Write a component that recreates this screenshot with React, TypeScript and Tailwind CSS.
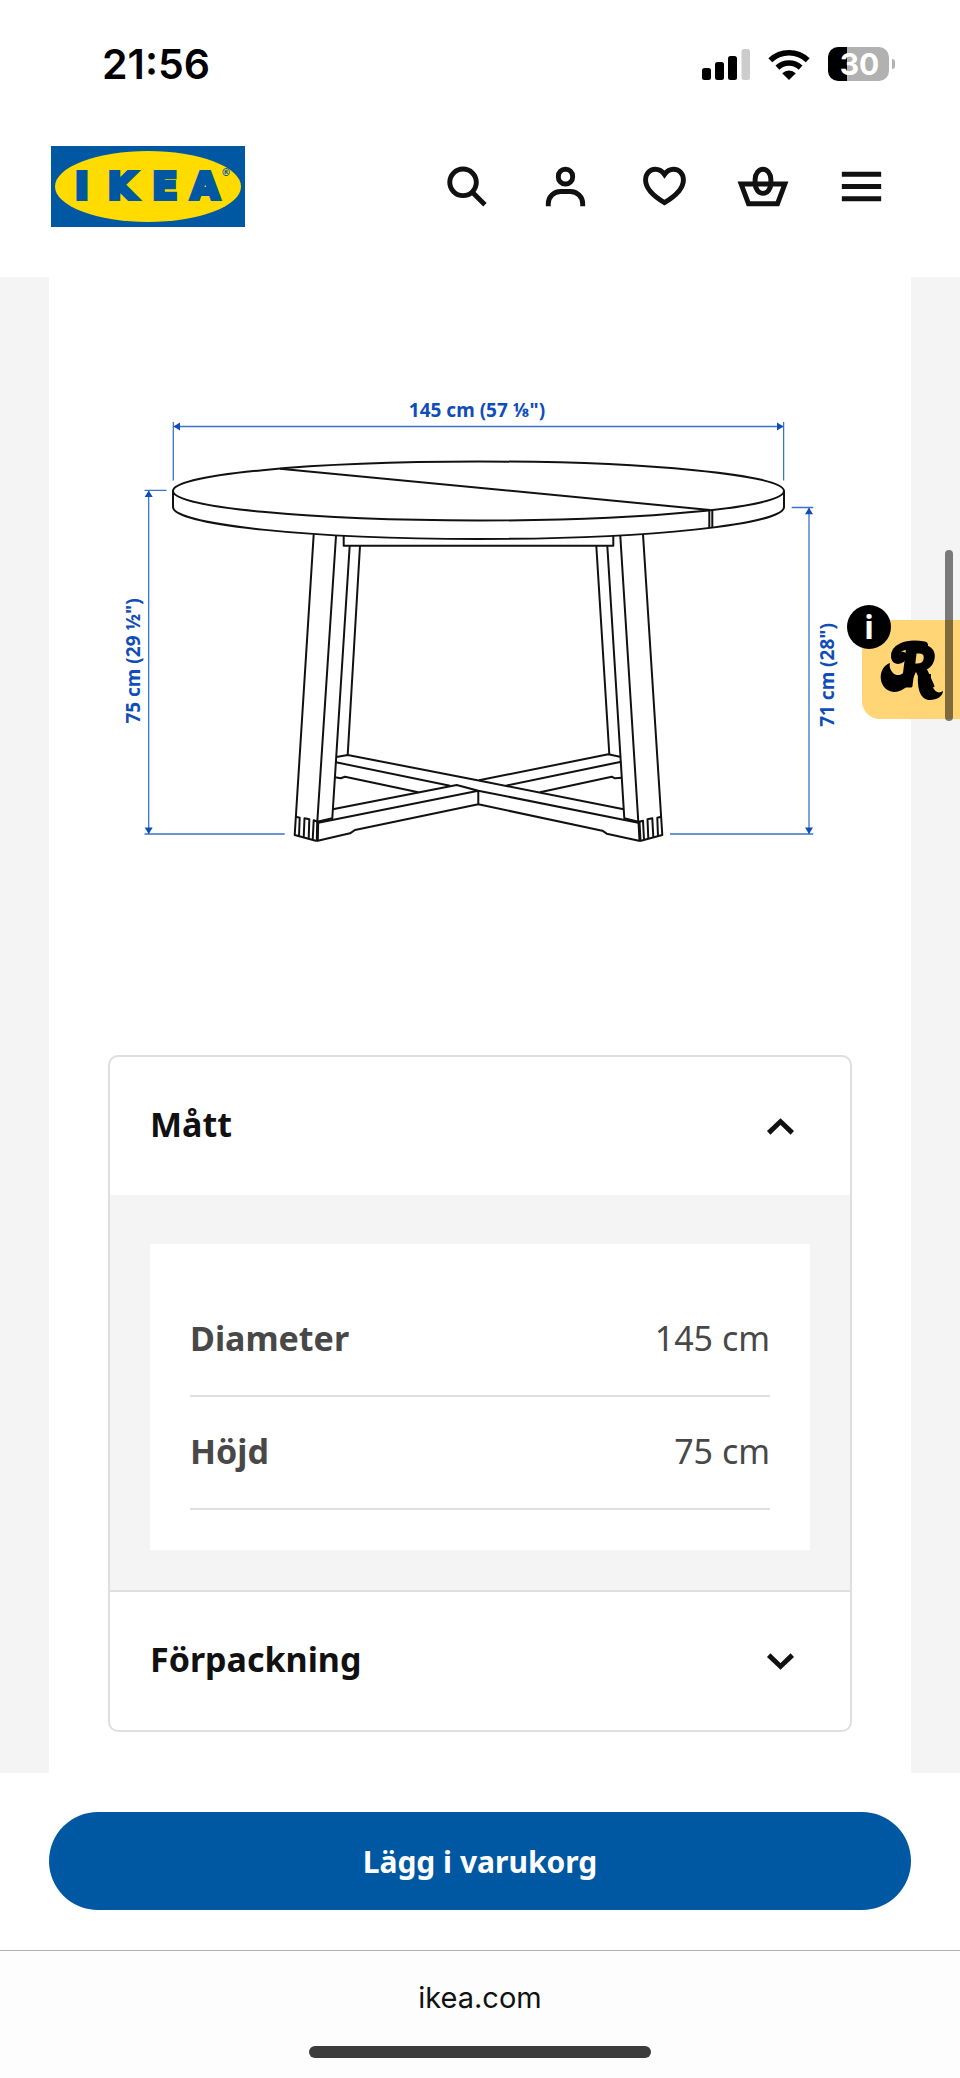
import { useState } from 'react';
import type { ReactNode } from 'react';

function StatusBar() {
  return (
    <div className="flex h-[128px] items-center justify-between pr-[65px] pl-[102px] font-['Inter',sans-serif]">
      <time className="text-[41px] leading-none font-semibold text-black">21:56</time>
      <div className="flex items-center gap-[18px]">
        <svg className="h-[32px] w-[48px]" viewBox="0 0 48 32" aria-label="Mobilsignal">
          <rect x="0" y="20" width="9" height="12" rx="2.5" />
          <rect x="13" y="14" width="9" height="18" rx="2.5" />
          <rect x="26" y="8" width="9" height="24" rx="2.5" />
          <rect x="39.5" y="1" width="8.5" height="31" rx="2.5" fill="#cccccc" />
        </svg>
        <svg className="h-[31px] w-[42px]" viewBox="0 0 42 31" aria-label="Wifi">
          <path
            fill="none"
            stroke="#000"
            strokeWidth="5.6"
            d="M2.3 11.2a27 27 0 0 1 37.4 0M9.4 18.6a17 17 0 0 1 23.2 0"
          />
          <path d="M21 31l-6.800-6.800a10 10 0 0 1 13.600 0z" />
        </svg>
        <div className="flex items-center gap-[3px]">
          <div className="flex h-[34px] w-[61px] items-center justify-center rounded-[10px] bg-[linear-gradient(to_right,#000_0_19px,#b1b1b1_19px)] pl-[2px] text-[30px] leading-none font-bold text-white">
            30
          </div>
          <div className="h-[10px] w-[3px] rounded-r-full bg-[#b1b1b1]" />
        </div>
      </div>
    </div>
  );
}

function Logo() {
  return (
    <svg className="block h-[81px] w-[194px]" viewBox="0 0 194 81" role="img" aria-label="IKEA">
      <rect width="194" height="81" fill="#0058a3" />
      <ellipse cx="97" cy="40.500" rx="93" ry="35.500" fill="#ffdb00" />
      <g fill="#0058a3" stroke="#0058a3" textAnchor="middle" fontFamily="DejaVu Sans" fontWeight="700">
        <text x="31 71 114 154" y="53" fontSize="37" strokeWidth="4">
          IKEA
        </text>
        <text x="175" y="30" fontSize="10" strokeWidth="0">
          ®
        </text>
      </g>
    </svg>
  );
}

function NavIcon({ label, children }: { label: string; children: ReactNode }) {
  return (
    <button type="button" aria-label={label} className="flex h-[98px] w-[99px] items-center justify-center">
      <svg className="h-[59px] w-[59px]" viewBox="0 0 24 24" fill="none" stroke="#111" strokeWidth="2">
        {children}
      </svg>
    </button>
  );
}

function Header() {
  return (
    <header className="bg-white pb-[42px]">
      <StatusBar />
      <div className="flex items-center justify-between pt-[9px] pr-[49px] pl-[51px]">
        <a href="#start" aria-label="IKEA">
          <Logo />
        </a>
        <nav className="flex">
          <NavIcon label="Sök">
            <path d="M14.700 14.200l5.200 5.200" />
            <circle cx="11" cy="10.300" r="5.400" />
          </NavIcon>
          <NavIcon label="Konto">
            <rect x="9.500" y="5" width="5.800" height="6" rx="2.800" />
            <path d="M5.400 20v-1a5 5 0 0 1 5-5h4a5 5 0 0 1 5 5v1" />
          </NavIcon>
          <NavIcon label="Favoriter">
            <path d="M12.400 7.100C11.400 5.700 10.100 5 8.700 5 6.300 5 4.700 6.900 4.700 9.400c0 3.600 3.500 6.700 7.700 9.200 4.200-2.500 7.700-5.600 7.700-9.200C20.100 6.900 18.500 5 16.100 5c-1.400 0-2.700.7-3.700 2.100z" />
          </NavIcon>
          <NavIcon label="Varukorg">
            <path d="M3.300 11h17.800L18.100 19H6.300z" />
            <rect x="9" y="5" width="6.400" height="9.800" rx="3.200" ry="4" />
          </NavIcon>
          <NavIcon label="Meny">
            <path d="M4 7h16M4 12h16M4 17h16" />
          </NavIcon>
        </nav>
      </div>
    </header>
  );
}

function TableDrawing() {
  return (
    <svg className="block w-full" viewBox="49 277 862 778" role="img" aria-label="Måttritning av bord">
      <g fill="none" stroke="#111" strokeWidth="2" strokeLinejoin="round">
        {/* table top */}
        <ellipse cx="478.5" cy="491" rx="305.5" ry="29.5" />
        <path d="M173 491V507A305.500 32 0 0 0 784 507V491M280 468.700L710 510" />
        <path d="M709.300 510V528M712.300 510V528" />
        <path d="M343.700 536V545.700H613.300V536" />
        {/* left legs */}
        <path d="M313.700 534.300L294.700 835L316.700 841M336 536L317.300 821.700L332.300 818.300L349.700 545.700M360 545.700L347.700 755" />
        {/* right legs */}
        <path d="M643 534.300L662.300 835L640 841M620.300 536L638.300 821.700L624.300 818.300L607.300 545.700M596.300 545.700L609.300 754.300" />
        {/* cross rails */}
        <path d="M336.300 757L347.700 755L480 780.700L623.700 809.300M336 762.300L450 785.700M335 777.300L340.700 778.300L345 776.700L418.300 792.300" />
        <path d="M332.700 809.300L456.700 785L478.300 790.700L638.300 822.700M318.300 822.700L478.300 790.700V804.300L355 830L350 833.300L316.700 841M478.300 804.300L602.300 830.700L606.700 833.700L640 841" />
        <path d="M479 780.300L608.300 754.300L621 757M506 785.700L621.300 761.700M540 792.300L611.700 776.700L615 778.300L621.700 777.700" />
        {/* finger joints */}
        <path d="M295.700 816.700L299.700 817.700L299 836.300M303.700 837.300L304.500 818.300L309.300 819.300L308.700 838.700M312.700 839.700L313.700 820.300L317.700 821.700" />
        <path d="M661.300 816.700L657.300 817.700L658 836.300M653.300 837.300L652.300 818.300L647.500 819.300L648.300 838.700M644 839.700L643 820.700L639 821.700" />
        <path strokeWidth="3" d="M317.700 822L317.300 841M639 822L640 841" />
      </g>
      <g fill="none" stroke="#3a72cf" strokeWidth="1.300">
        <path d="M173.300 422V480.500M783.600 422V480.500M173.300 426.500H783.600" />
        <path d="M144.500 490.300H166.500M148.700 490.300V834M144.500 834H284.700" />
        <path d="M791.700 507.500H813.300M809 507.500V834M670 834H813.300" />
      </g>
      <g fill="#0f4db8">
        <path d="M173.500 426.500l6.500-4v8zM783.500 426.500l-6.500-4v8z" />
        <path d="M148.700 490.500l-4 6.500h8zM148.700 834l-4-6.500h8z" />
        <path d="M809 507.700l-4 6.500h8zM809 834l-4-6.500h8z" />
      </g>
      <g fill="#0f4db8" fontFamily="Noto Sans" fontWeight="700" fontSize="19" textAnchor="middle">
        <text x="477" y="417">145 cm (57 ⅛")</text>
        <text transform="translate(140 661) rotate(-90)">75 cm (29 ½")</text>
        <text transform="translate(834 675) rotate(-90)">71 cm (28")</text>
      </g>
    </svg>
  );
}

function Chevron({ up }: { up: boolean }) {
  return (
    <svg className="h-[59px] w-[59px]" viewBox="0 0 24 24" fill="none" stroke="#111" strokeWidth="2">
      <path d={up ? 'M7.200 14.600L12 10l4.800 4.600' : 'M7.200 9.400L12 14l4.800-4.600'} />
    </svg>
  );
}

function SectionHeader({ title, open, onToggle }: { title: string; open: boolean; onToggle: () => void }) {
  return (
    <h2>
      <button
        type="button"
        aria-expanded={open}
        onClick={onToggle}
        className="flex h-[138px] w-full items-center justify-between px-[40px] text-left text-[34px] font-bold text-[#111]"
      >
        <span className="pb-1">{title}</span>
        <Chevron up={open} />
      </button>
    </h2>
  );
}

const measurements = [
  { name: 'Diameter', value: '145 cm' },
  { name: 'Höjd', value: '75 cm' },
];

function Accordion() {
  const [sizesOpen, setSizesOpen] = useState(true);
  const [packageOpen, setPackageOpen] = useState(false);
  return (
    <div className="mx-[59px] overflow-hidden rounded-[10px] border-2 border-[#dfdfdf] bg-white">
      <SectionHeader title="Mått" open={sizesOpen} onToggle={() => setSizesOpen(!sizesOpen)} />
      {sizesOpen && (
        <div className="bg-[#f4f4f4] px-[40px] pt-[49px] pb-[40px]">
          <dl className="bg-white px-[40px] py-[40px] text-[34px] text-[#484848]">
            {measurements.map((m) => (
              <div
                key={m.name}
                className="flex h-[113px] items-center justify-between border-b-2 border-[#dfdfdf] pb-[3px]"
              >
                <dt className="font-bold">{m.name}</dt>
                <dd>{m.value}</dd>
              </div>
            ))}
          </dl>
        </div>
      )}
      <div className="border-t-2 border-[#dfdfdf]">
        <SectionHeader title="Förpackning" open={packageOpen} onToggle={() => setPackageOpen(!packageOpen)} />
      </div>
    </div>
  );
}

function InfoWidget() {
  return (
    <button
      type="button"
      aria-label="Information"
      className="absolute top-[620px] right-0 h-[99px] w-[98px] rounded-l-[18px] bg-[#ffd576]"
    >
      <svg className="absolute inset-0 h-[99px] w-[98px]" viewBox="862 620 98 99" aria-hidden="true">
        <text
          x="901"
          y="686"
          fontFamily="Lato"
          fontWeight="900"
          fontStyle="italic"
          fontSize="56"
          stroke="#000"
          strokeWidth="3"
          strokeLinejoin="round"
        >
          R
        </text>
        <path
          fill="none"
          stroke="#000"
          strokeWidth="8"
          strokeLinecap="round"
          d="M924 645.500C905 642 894 649 895 657C896 661 901 661 903 656"
        />
        <path d="M890 663C879 667 878 682 886 689C897 697 912 688 917 668L908 664C905 676 897 677 893 673C890 670 889 666 890 663Z" />
        <path d="M918 675C917 690 921 700 930 700C937 700 943 696 943 691C936 696 930 687 931 674Z" />
      </svg>
      <span className="absolute top-[-15px] left-[-15px] flex h-[44px] w-[44px] items-center justify-center rounded-full bg-black text-[32px] leading-none font-bold text-white">
        i
      </span>
    </button>
  );
}

export default function App() {
  return (
    <div className="relative min-h-screen bg-[#f4f4f4] font-['Noto_Sans',sans-serif]">
      <Header />
      <main className="mx-[49px] bg-white pb-[41px]">
        <TableDrawing />
        <Accordion />
      </main>
      <footer className="bg-white">
        <div className="px-[49px] pt-[39px] pb-[40px]">
          <button
            type="button"
            className="h-[98px] w-full rounded-full bg-[#0058a3] text-[30px] font-bold text-white"
          >
            Lägg i varukorg
          </button>
        </div>
        <div className="flex flex-col items-center border-t border-[#b0b0b0] bg-[#fdfdfd] pt-[30px] pb-[20px] font-['Inter',sans-serif]">
          <a href="#ikea" className="text-[29px] leading-[34px] text-[#111]">
            ikea.com
          </a>
          <div className="mt-[31px] h-[12px] w-[342px] rounded-full bg-[#3c3c3c]" />
        </div>
      </footer>
      <InfoWidget />
      <div className="absolute top-[550px] right-[7px] h-[171px] w-[8px] rounded-full bg-black/50" />
    </div>
  );
}
